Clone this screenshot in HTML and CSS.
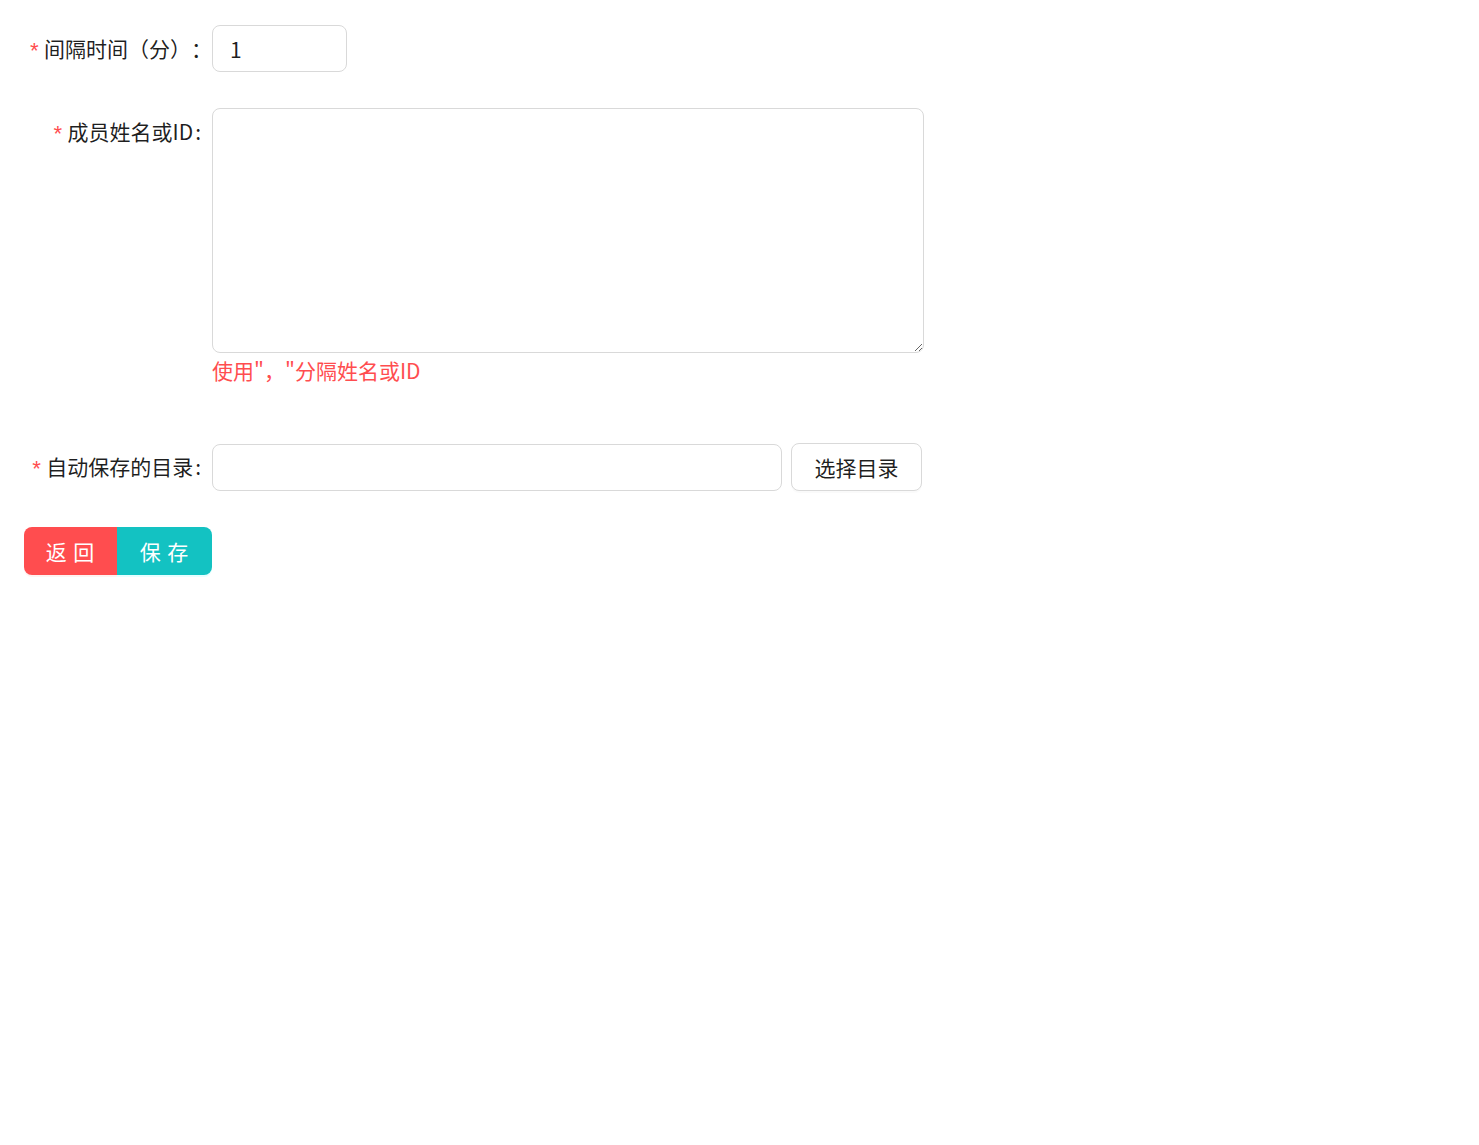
FILE: index.html
```html
<!DOCTYPE html>
<html lang="zh">
<head>
<meta charset="utf-8">
<link rel="stylesheet" href="styles.css">
</head>
<body>
<form class="form">
  <div class="row">
    <label class="label"><span class="req">*</span>间隔时间（分）：</label>
    <div class="control">
      <input class="input input-short" type="text" value="1">
    </div>
  </div>
  <div class="row row-area">
    <label class="label"><span class="req">*</span>成员姓名或ID<span class="colon">:</span></label>
    <div class="control">
      <textarea class="textarea"></textarea>
      <div class="hint">使用"，"分隔姓名或ID</div>
    </div>
  </div>
  <div class="row">
    <label class="label"><span class="req">*</span>自动保存的目录<span class="colon">:</span></label>
    <div class="control control-inline">
      <input class="input input-dir" type="text">
      <button type="button" class="btn-default">选择目录</button>
    </div>
  </div>
  <div class="actions">
    <button type="button" class="btn btn-back">返 回</button><button type="button" class="btn btn-save">保 存</button>
  </div>
</form>
</body>
</html>
```
FILE: styles.css
```css
* { box-sizing: border-box; }
html, body { margin: 0; background: #fff; }
body {
  font-family: "Noto Sans CJK SC", "Noto Sans", sans-serif;
  font-size: 21px;
  color: rgba(0,0,0,0.88);
  text-spacing-trim: space-all;
}
.form {
  padding: 25px 24px;
  display: flex;
  flex-direction: column;
}
.row {
  display: flex;
  align-items: flex-start;
  margin-bottom: 36px;
}
.row-area { margin-bottom: 54px; }
.label {
  width: 188px;
  flex: none;
  display: flex;
  justify-content: flex-end;
  align-items: center;
  height: 47px;
  line-height: 47px;
  padding-right: 0;
  white-space: nowrap;
}
.req {
  color: #ff4d4f;
  font-family: "Liberation Mono", monospace;
  font-size: 22px;
  position: relative;
  top: 5px;
  margin-right: 3px;
}
.colon { margin: 0 11px 0 2px; }
.control { display: flex; flex-direction: column; }
.control-inline { flex-direction: row; align-items: center; gap: 9px; }
.input {
  height: 47px;
  border: 1px solid #d9d9d9;
  border-radius: 8px;
  font: inherit;
  padding: 0 17px;
  color: rgba(0,0,0,0.88);
  outline: none;
  background: #fff;
}
.input-short { width: 135px; }
.input-dir { width: 570px; }
.textarea {
  width: 712px;
  height: 245px;
  border: 1px solid #d9d9d9;
  border-radius: 8px;
  font: inherit;
  padding: 8px 17px;
  resize: vertical;
  outline: none;
  display: block;
}
.hint {
  color: #ff4d4f;
  line-height: 34px;
  height: 36px;
}
.btn-default {
  width: 131px;
  height: 48px;
  border: 1px solid #d9d9d9;
  border-radius: 8px;
  background: #fff;
  font: inherit;
  color: rgba(0,0,0,0.88);
  box-shadow: 0 2px 0 rgba(0,0,0,0.02);
  padding: 0;
}
.actions { display: flex; }
.btn {
  height: 48px;
  border: none;
  font: inherit;
  color: #fff;
  padding: 0;
  letter-spacing: 1px;
}
.btn-back {
  width: 93px;
  background: #ff4d4f;
  border-radius: 8px 0 0 8px;
  box-shadow: 0 2px 0 rgba(255,38,5,0.06);
}
.btn-save {
  width: 95px;
  background: #13c2c2;
  border-radius: 0 8px 8px 0;
  box-shadow: 0 2px 0 rgba(5,255,255,0.1);
}
```
